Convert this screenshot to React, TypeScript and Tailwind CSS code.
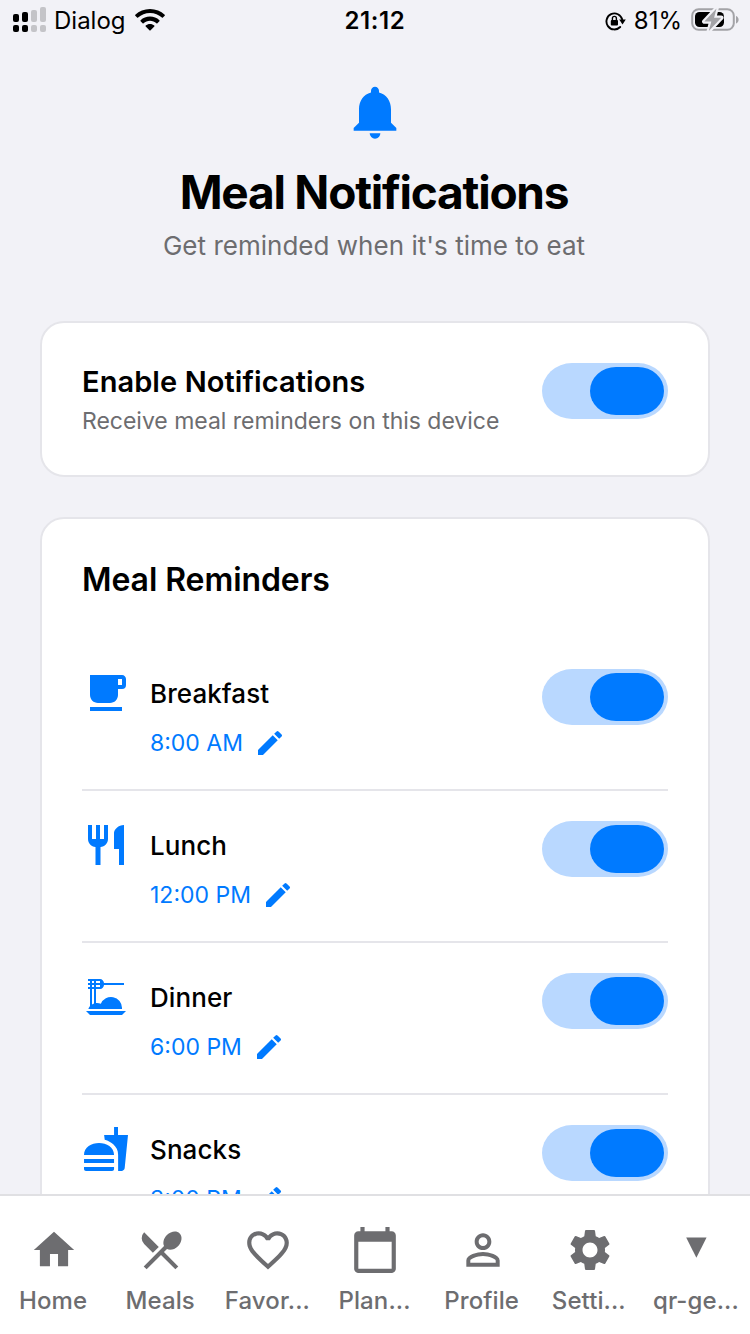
import type { IconType } from "react-icons";
import {
  MdCalendarToday,
  MdDinnerDining,
  MdEdit,
  MdFastfood,
  MdFavoriteBorder,
  MdFreeBreakfast,
  MdLocalDining,
  MdNotifications,
  MdPersonOutline,
  MdRestaurant,
  MdSettings,
} from "react-icons/md";

function SignalIcon() {
  const bars = [
    { x: 0, top: 7, color: "#000" },
    { x: 9, top: 5, color: "#000" },
    { x: 18, top: 3, color: "#c4c4c8" },
    { x: 27, top: 0, color: "#c4c4c8" },
  ];
  return (
    <svg width="34" height="26" viewBox="0 0 34 26">
      {bars.map((b) => (
        <g key={b.x} fill={b.color}>
          <rect x={b.x} y={b.top} width="6" height={15 - b.top} rx="2" />
          <rect x={b.x} y="18" width="6" height="7" rx="2" />
        </g>
      ))}
    </svg>
  );
}

function WifiIcon() {
  return (
    <svg width="30" height="23" viewBox="0 0 30 23">
      <path d="M15 0C9.300 0 4.100 2.200.300 5.800c-.300.300-.300.700 0 1l1.800 1.800c.300.300.700.300 1 0C6.200 5.700 10.400 4 15 4s8.800 1.700 11.900 4.600c.300.300.700.300 1 0l1.800-1.800c.300-.300.300-.700 0-1C25.900 2.200 20.700 0 15 0z" />
      <path d="M15 7.600c-3.600 0-6.900 1.400-9.400 3.600-.300.300-.300.700 0 1l2 2c.300.300.700.300 1 0 1.700-1.500 3.900-2.500 6.400-2.500s4.700 1 6.400 2.500c.300.300.700.300 1 0l2-2c.300-.300.300-.700 0-1-2.500-2.200-5.800-3.600-9.400-3.600z" />
      <path d="M15 15c-1.700 0-3.200.600-4.300 1.600-.300.300-.300.700 0 1l3.700 3.700c.300.300.900.300 1.200 0l3.700-3.700c.300-.300.300-.700 0-1C18.200 15.600 16.700 15 15 15z" />
    </svg>
  );
}

function RotationLockIcon() {
  return (
    <svg width="21" height="20" viewBox="0 0 21 20">
      <path d="M15.200 16A8 8 0 1 1 17.200 8.500" fill="none" stroke="#000" strokeWidth="1.900" strokeLinecap="round" />
      <path d="M14.200 8.600h6.600l-3.300 4.800z" />
      <rect x="5.800" y="9" width="7.200" height="5.400" rx="1" />
      <path d="M7.400 9.200V7.400a2 2 0 0 1 4 0v1.800" fill="none" stroke="#000" strokeWidth="1.400" />
    </svg>
  );
}

function BatteryIcon() {
  return (
    <svg width="48" height="26" viewBox="0 0 48 26">
      <rect x="1.200" y="2.200" width="41.600" height="20.600" rx="6.500" fill="none" stroke="#a3a3a7" strokeWidth="2" />
      <path d="M45 9v7.500c1.600-.600 2.600-2 2.600-3.750S46.600 9.600 45 9z" fill="#a3a3a7" />
      <rect x="4" y="5" width="29" height="15" rx="4.500" />
      <path
        d="M25.500 1.500 13.300 14.600h7L17.800 24 30.300 10.700h-7.200z"
        fill="#a3a3a7"
        stroke="#f2f2f7"
        strokeWidth="4.400"
        strokeLinejoin="round"
        paintOrder="stroke"
      />
    </svg>
  );
}

function HomeIcon({ className }: { className?: string }) {
  return (
    <svg viewBox="-0.4 -0.4 24.8 24.8" fill="currentColor" className={className}>
      <path d="M10 20v-6h4v6h5v-8h3L12 3 2 12h3v8z" />
    </svg>
  );
}

function TriangleIcon({ className }: { className?: string }) {
  return (
    <svg viewBox="0 0 48 48" fill="currentColor" className={className}>
      <path d="M13.600 12h19.600L23.400 31.500z" />
    </svg>
  );
}

function Toggle() {
  return (
    <button
      type="button"
      role="switch"
      aria-checked="true"
      className="flex h-14 w-[126px] shrink-0 items-center justify-end rounded-[30px/28px] bg-[#b9d8ff] pr-1"
    >
      <span className="h-12 w-[74px] rounded-[26px/24px] bg-[#007aff]" />
    </button>
  );
}

interface Meal {
  name: string;
  time: string;
  Icon: IconType;
}

const meals: Meal[] = [
  { name: "Breakfast", time: "8:00 AM", Icon: MdFreeBreakfast },
  { name: "Lunch", time: "12:00 PM", Icon: MdRestaurant },
  { name: "Dinner", time: "6:00 PM", Icon: MdDinnerDining },
  { name: "Snacks", time: "3:00 PM", Icon: MdFastfood },
];

function MealRow({ name, time, Icon }: Meal) {
  return (
    <div className="flex h-[152px] items-start border-b-2 border-[#e5e5ea] pt-[30px]">
      <Icon className="size-12 shrink-0 text-[#007aff]" />
      <div className="ml-5 flex-1">
        <div className="h-12 text-[26px] leading-[50px] font-medium tracking-[0.08px] text-black">{name}</div>
        <div className="flex h-[52px] items-center gap-[11px] text-[#007aff]">
          <span className="text-[23px]">{time}</span>
          <MdEdit className="size-8" />
        </div>
      </div>
      <Toggle />
    </div>
  );
}

const tabs = [
  { label: "Home", Icon: HomeIcon },
  { label: "Meals", Icon: MdLocalDining },
  { label: "Favor...", Icon: MdFavoriteBorder },
  { label: "Plan...", Icon: MdCalendarToday },
  { label: "Profile", Icon: MdPersonOutline },
  { label: "Setti...", Icon: MdSettings },
  { label: "qr-ge...", Icon: TriangleIcon },
];

export default function App() {
  return (
    <div className="flex h-[1334px] w-[750px] flex-col overflow-hidden bg-[#f2f2f7] font-['Inter',sans-serif] text-black">
      <header className="grid h-10 shrink-0 grid-cols-3 items-center pr-[11px] pl-[13px] text-[24px]">
        <div className="flex items-center">
          <SignalIcon />
          <span className="mt-[2px] ml-[7px]">Dialog</span>
          <span className="ml-[9px]">
            <WifiIcon />
          </span>
        </div>
        <div className="mt-[2px] pr-[2px] text-center text-[24px] font-semibold tracking-[0.6px]">21:12</div>
        <div className="flex items-center justify-end">
          <span className="mt-px">
            <RotationLockIcon />
          </span>
          <span className="mt-[2px] mr-[9px] ml-[8px]">81%</span>
          <BatteryIcon />
        </div>
      </header>

      <main className="flex min-h-0 flex-1 flex-col overflow-hidden px-10 pt-10">
        <section className="flex shrink-0 flex-col items-center">
          <MdNotifications className="size-16 text-[#007aff]" />
          <h1 className="mt-4 h-16 pr-[2px] text-[46px] leading-[64px] font-bold tracking-[-1.22px] whitespace-nowrap">
            Meal Notifications
          </h1>
          <p className="mt-1 h-9 pr-[2px] text-[26px] leading-9 tracking-[0.02px] whitespace-nowrap text-[#6d6d70]">
            Get reminded when it's time to eat
          </p>
        </section>

        <section className="mt-[57px] flex h-[156px] shrink-0 items-start justify-between rounded-[24px] border-2 border-[#e5e5ea] bg-white px-10 pt-[39px]">
          <div>
            <h2 className="h-10 text-[29px] leading-10 font-semibold tracking-[0.08px] whitespace-nowrap">
              Enable Notifications
            </h2>
            <p className="h-10 text-[23px] leading-[39px] tracking-[-0.02px] whitespace-nowrap text-[#6d6d70]">
              Receive meal reminders on this device
            </p>
          </div>
          <div className="pt-px">
            <Toggle />
          </div>
        </section>

        <section className="mt-10 shrink-0 rounded-[24px] border-2 border-[#e5e5ea] bg-white px-10 pt-10">
          <h2 className="h-20 text-[32px] leading-[41px] font-semibold tracking-[-0.08px]">Meal Reminders</h2>
          {meals.map((meal) => (
            <MealRow key={meal.name} {...meal} />
          ))}
        </section>
      </main>

      <nav className="grid h-[140px] shrink-0 grid-cols-7 border-t-2 border-[#e0e0e3] bg-white pt-[29px] text-[#6d6d70]">
        {tabs.map(({ label, Icon }) => (
          <div key={label} className="flex flex-col items-center">
            <Icon className="ml-px size-[50px]" />
            <span className="mt-2 h-9 pr-px text-[24px] leading-9 font-medium tracking-[0.1px] whitespace-nowrap">
              {label}
            </span>
          </div>
        ))}
      </nav>
    </div>
  );
}
